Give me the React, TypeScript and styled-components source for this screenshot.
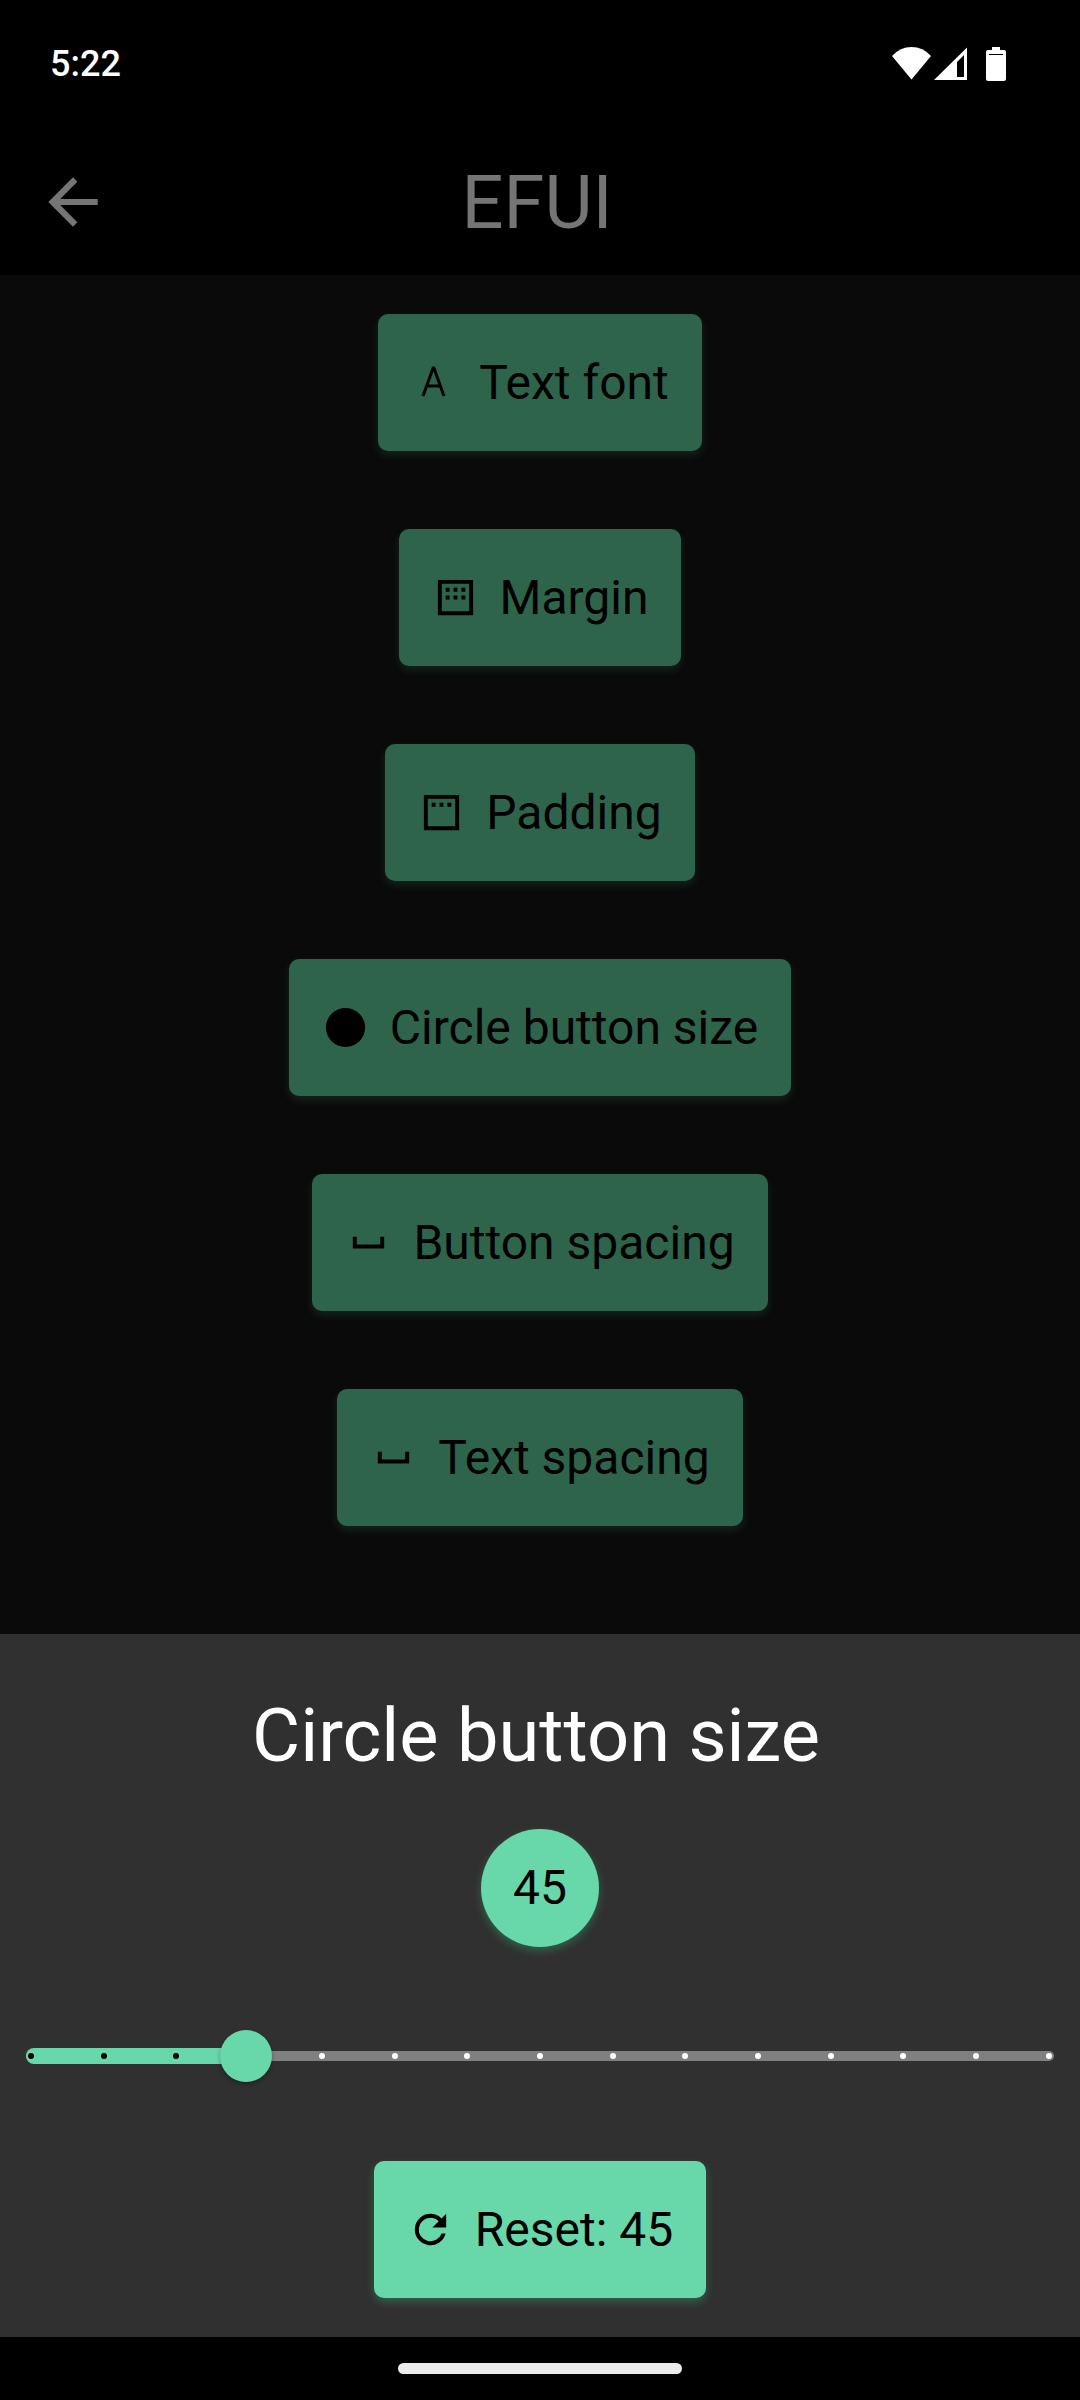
import React, { useState } from "react";
import styled, { createGlobalStyle } from "styled-components";

const GlobalStyle = createGlobalStyle`
  * { box-sizing: border-box; }
  body {
    margin: 0;
    background: #000;
    font-family: Roboto, "Noto Sans", "Liberation Sans", sans-serif;
  }
`;

const Screen = styled.div`
  display: flex;
  flex-direction: column;
  min-height: 100vh;
  background: #000;
`;

const StatusBar = styled.div`
  display: flex;
  align-items: center;
  justify-content: space-between;
  height: 128px;
  padding: 0 72px 0 50px;
  color: #fff;
  font-size: 36px;
  font-weight: 500;
  line-height: 42px;
`;

const StatusIcons = styled.div`
  display: flex;
  align-items: center;
`;

const AppBar = styled.header`
  display: grid;
  grid-template-columns: 146px 1fr 152px;
  align-items: center;
  height: 147px;
  color: #757575;
`;

const BackButton = styled.button`
  display: flex;
  justify-self: center;
  padding: 0;
  border: 0;
  background: none;
  color: inherit;
  cursor: pointer;
`;

const Title = styled.h1`
  margin: 0;
  padding-top: 3px;
  font-size: 74px;
  font-weight: 400;
  line-height: 86px;
  text-align: center;
`;

const Options = styled.main`
  display: flex;
  flex: 1;
  flex-direction: column;
  align-items: center;
  gap: 78px;
  padding: 39px 24px 78px;
  background: #0a0a0a;
`;

const ActionButton = styled.button<{ $dimmed?: boolean }>`
  display: flex;
  align-items: center;
  gap: 21px;
  height: 137px;
  padding: 0 33px;
  border: 0;
  border-radius: 10px;
  background: ${(p) => (p.$dimmed ? "#2e644c" : "#68d8aa")};
  box-shadow: 0 4px 8px ${(p) => (p.$dimmed ? "rgba(46, 100, 76, 0.3)" : "rgba(54, 170, 122, 0.4)")};
  color: #000;
  font: inherit;
  font-size: 48px;
  line-height: 56px;
  cursor: pointer;
`;

const Sheet = styled.section`
  display: flex;
  flex-direction: column;
  align-items: center;
  padding: 59px 0 39px;
  background: #303030;
`;

const SheetTitle = styled.h2`
  margin: 0 0 50px;
  padding-right: 8px;
  color: #fff;
  font-size: 74px;
  font-weight: 400;
  line-height: 86px;
`;

const Preview = styled.output`
  display: flex;
  align-items: center;
  justify-content: center;
  border-radius: 50%;
  background: #68d8aa;
  box-shadow: 0 4px 8px rgba(54, 170, 122, 0.4);
  color: #000;
  font-size: 48px;
  line-height: 56px;
`;

const Slider = styled.div`
  display: grid;
  width: 100%;
  margin: 83px 0 79px;
  align-items: center;

  > * { grid-area: 1 / 1; }
`;

const Rail = styled.div`
  height: 10px;
  margin: 0 26px;
  border-radius: 5px;
  background: #808080;
`;

const FillArea = styled.div`
  margin: 0 26px;
`;

const Fill = styled.div`
  height: 16px;
  border-radius: 8px;
  background: #68d8aa;
`;

const Ticks = styled.div`
  display: flex;
  justify-content: space-between;
  margin: 0 28px;
`;

const Tick = styled.span<{ $active: boolean }>`
  width: 6px;
  height: 6px;
  border-radius: 50%;
  background: ${(p) => (p.$active ? "#000" : "#fff")};
`;

const Range = styled.input`
  width: 100%;
  height: 52px;
  margin: 0;
  appearance: none;
  background: transparent;
  cursor: pointer;

  &::-webkit-slider-thumb {
    width: 52px;
    height: 52px;
    appearance: none;
    border: 0;
    border-radius: 50%;
    background: #68d8aa;
    box-shadow: 0 2px 4px rgba(0, 0, 0, 0.3);
  }
`;

const NavBar = styled.footer`
  display: flex;
  align-items: center;
  justify-content: center;
  height: 63px;
`;

const HomePill = styled.div`
  width: 284px;
  height: 11px;
  border-radius: 6px;
  background: #ebebeb;
`;

const Icon = ({ d, size = 47 }: { d: string; size?: number }) => (
  <svg width={size} height={size} viewBox="0 0 24 24" fill="currentColor" aria-hidden="true">
    <path d={d} />
  </svg>
);

const FontIcon = () => (
  <svg width="47" height="47" viewBox="0 0 47 47" fill="none" stroke="currentColor" strokeWidth="3" aria-hidden="true">
    <path d="M12 37L22.500 8L33 37M15.500 27H29.500" strokeLinejoin="bevel" />
  </svg>
);

const BACK = "M20 11H7.830l5.590-5.590L12 4l-8 8 8 8 1.410-1.410L7.830 13H20z";
const MARGIN =
  "M3 3v18h18V3zM19 19H5V5h14zM7 7h2v2H7zM11 7h2v2h-2zM15 7h2v2h-2zM7 11h2v2H7zM11 11h2v2h-2zM15 11h2v2h-2z";
const PADDING = "M3 3v18h18V3zM19 19H5V5h14zM7 7h2v2H7zM11 7h2v2h-2zM15 7h2v2h-2z";
const CIRCLE = "M12 2a10 10 0 1 0 0 20a10 10 0 1 0 0-20z";
const SPACE = "M18 9v4H6V9H4v6h16V9z";
const REFRESH =
  "M17.650 6.350A7.960 7.960 0 0 0 12 4a8 8 0 1 0 7.730 10h-2.080A6 6 0 1 1 12 6c1.660 0 3.140.690 4.220 1.780L13 11h7V4z";

const options = [
  { label: "Text font", icon: <FontIcon /> },
  { label: "Margin", icon: <Icon d={MARGIN} /> },
  { label: "Padding", icon: <Icon d={PADDING} /> },
  { label: "Circle button size", icon: <Icon d={CIRCLE} /> },
  { label: "Button spacing", icon: <Icon d={SPACE} /> },
  { label: "Text spacing", icon: <Icon d={SPACE} /> },
];

const MIN = 30;
const MAX = 100;
const STEP = 5;
const DEFAULT_SIZE = 45;
const DENSITY = 2.625;
const steps = Array.from({ length: (MAX - MIN) / STEP + 1 }, (_, i) => MIN + i * STEP);

export default function App() {
  const [size, setSize] = useState(DEFAULT_SIZE);
  const diameter = Math.round(size * DENSITY);

  return (
    <Screen>
      <GlobalStyle />
      <StatusBar>
        <span>5:22</span>
        <StatusIcons>
          <svg width="116" height="36" viewBox="0 0 116 36" fill="#fff" aria-hidden="true">
            <path d="M0 10Q8 1 19.500 1T39 10L19.500 33.500z" />
            <path fillRule="evenodd" d="M42 34L75 1.500V34zM65 16V31H72V9z" />
            <path
              fillRule="evenodd"
              d="M100 1h8v3h4q2 0 2 2v27q0 2-2 2h-16q-2 0-2-2V6q0-2 2-2h4zM97 8v1h14V8z"
            />
          </svg>
        </StatusIcons>
      </StatusBar>
      <AppBar>
        <BackButton type="button" aria-label="Back">
          <Icon d={BACK} size={74} />
        </BackButton>
        <Title>EFUI</Title>
      </AppBar>
      <Options>
        {options.map((option) => (
          <ActionButton key={option.label} type="button" $dimmed>
            {option.icon}
            <span>{option.label}</span>
          </ActionButton>
        ))}
      </Options>
      <Sheet aria-labelledby="sheet-title">
        <SheetTitle id="sheet-title">Circle button size</SheetTitle>
        <Preview htmlFor="size" style={{ width: diameter, height: diameter }}>
          {size}
        </Preview>
        <Slider>
          <Rail />
          <FillArea>
            <Fill style={{ width: `${((size - MIN) / (MAX - MIN)) * 100}%` }} />
          </FillArea>
          <Ticks>
            {steps.map((step) => (
              <Tick key={step} $active={step <= size} />
            ))}
          </Ticks>
          <Range
            id="size"
            type="range"
            aria-labelledby="sheet-title"
            min={MIN}
            max={MAX}
            step={STEP}
            value={size}
            onChange={(e) => setSize(Number(e.target.value))}
          />
        </Slider>
        <ActionButton type="button" onClick={() => setSize(DEFAULT_SIZE)}>
          <Icon d={REFRESH} />
          <span>Reset: {DEFAULT_SIZE}</span>
        </ActionButton>
      </Sheet>
      <NavBar>
        <HomePill />
      </NavBar>
    </Screen>
  );
}
